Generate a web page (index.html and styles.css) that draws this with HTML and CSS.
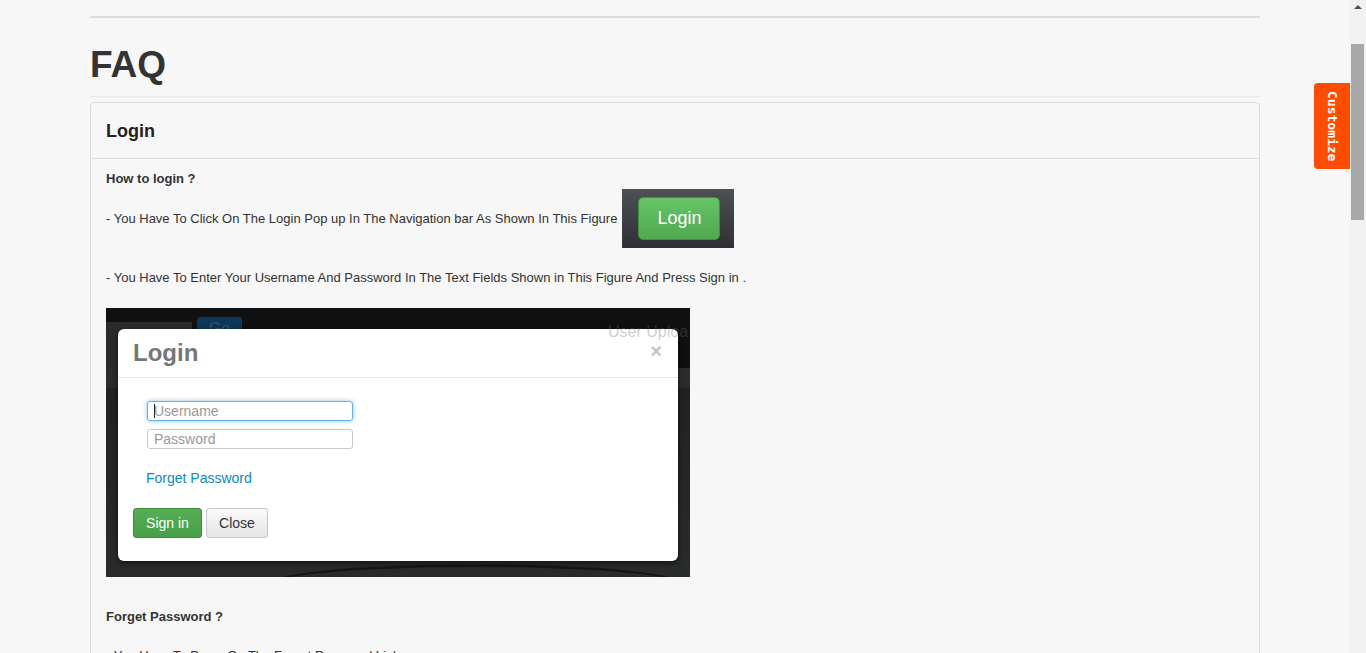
FILE: index.html
```html
<!DOCTYPE html>
<html>
<head>
<meta charset="utf-8">
<link rel="stylesheet" href="styles.css">
</head>
<body>
<div class="page">
  <div class="container">
    <hr class="top-rule">
    <div class="page-header"><h1>FAQ</h1></div>
    <div class="panel">
      <div class="panel-heading">Login</div>
      <div class="panel-body">
        <p class="q">How to login ?</p>
        <p class="line-img">- You Have To Click On The Login Pop up In The Navigation bar As Shown In This Figure
          <span class="shot-login"><span class="shot-login-btn">Login</span></span>
        </p>
        <p class="line l3">- You Have To Enter Your Username And Password In The Text Fields Shown in This Figure And Press Sign in .</p>
        <div class="shot-modal">
          <div class="sm-top">
            <div class="sm-tab"></div>
            <div class="sm-go">Go</div>
          </div>
          <div class="sm-band"></div>
          <div class="sm-dialog">
            <div class="sm-head"><span class="sm-title">Login</span><span class="sm-x">×</span></div>
            <div class="sm-body">
              <div class="sm-input focus"><span class="caret"></span>Username</div>
              <div class="sm-input">Password</div>
              <div class="sm-link">Forget Password</div>
              <div class="sm-btns"><span class="sm-sign">Sign in</span><span class="sm-close">Close</span></div>
            </div>
          </div>
          <div class="sm-user">User Uploa</div>
          <div class="sm-swoosh"></div>
        </div>
        <p class="q fp">Forget Password ?</p>
        <p class="line l5">- You Have To Press On The Forget Password Link</p>
      </div>
    </div>
  </div>
  <div class="customize">Customize</div>
  <div class="scrollbar"><div class="sb-up"></div><div class="sb-thumb"></div></div>
</div>
</body>
</html>
```
FILE: styles.css
```css
body {
  margin: 0;
  padding-right: 16px;
  background: #f7f7f7;
  font-family: "Liberation Sans", Arial, sans-serif;
  color: #333;
}
.page { min-height: 1400px; }
.container {
  width: 1170px;
  margin: 0 auto;
}
.top-rule {
  margin: 16px 0 0;
  border: 0;
  height: 2px;
  background: #dddddd;
}
.page-header {
  border-bottom: 1px solid #e8e8e8;
  height: 78px;
}
.page-header h1 {
  margin: 0;
  padding-top: 27px;
  font-size: 37px;
  line-height: 40px;
  font-weight: bold;
  color: #333;
}
.panel {
  margin-top: 5px;
  border: 1px solid #dddddd;
  border-radius: 4px;
  min-height: 1200px;
}
.panel-heading {
  height: 56px;
  box-sizing: border-box;
  padding: 15px 15px;
  font-size: 18px;
  line-height: 26px;
  font-weight: bold;
  color: #222;
  border-bottom: 1px solid #dddddd;
}
.panel-body {
  padding: 11px 15px;
  font-size: 13px;
  line-height: 18px;
}
.panel-body p { margin: 0; }
.q { font-weight: bold; color: #333; }
.line-img {
  display: flex;
  align-items: center;
  margin-top: 1px !important;
  white-space: nowrap;
}
.shot-login {
  display: block;
  width: 112px;
  height: 59px;
  margin-left: 5px;
  background: linear-gradient(#4d5055, #2e3034);
  position: relative;
}
.shot-login-btn {
  position: absolute;
  left: 16px;
  top: 8px;
  width: 82px;
  height: 43px;
  border-radius: 5px;
  background: linear-gradient(#66c466, #4fa94f);
  border: 1px solid #3f8f3f;
  box-sizing: border-box;
  color: #fff;
  font-size: 18px;
  line-height: 41px;
  text-align: center;
}
.l3 { margin-top: 21px !important; }
.shot-modal {
  margin-top: 21px;
  width: 584px;
  height: 269px;
  background: linear-gradient(#1d1e20, #2a2b2c);
  position: relative;
  overflow: hidden;
}
.sm-top {
  height: 60px;
  background: #0f1012;
  position: relative;
}
.sm-tab {
  position: absolute;
  left: 0;
  top: 14px;
  width: 86px;
  height: 50px;
  background: #2b2b2c;
}
.sm-go {
  position: absolute;
  left: 91px;
  top: 9px;
  width: 45px;
  height: 30px;
  background: #0c385a;
  border-radius: 3px;
  color: #3a5468;
  font-size: 16px;
  line-height: 24px;
  text-align: center;
}
.sm-user {
  position: absolute;
  left: 502px;
  top: 14px;
  white-space: nowrap;
  color: rgba(110,110,110,0.35);
  font-size: 16px;
  line-height: 20px;
}
.sm-band {
  height: 20px;
  background: #2c2c2d;
}
.sm-dialog {
  position: absolute;
  left: 12px;
  top: 21px;
  width: 560px;
  height: 232px;
  background: #fff;
  border-radius: 6px;
  box-shadow: 0 2px 6px rgba(0,0,0,0.6);
}
.sm-head {
  height: 48px;
  border-bottom: 1px solid #e8e8e8;
  display: flex;
  justify-content: space-between;
  align-items: center;
  padding: 0 15px;
}
.sm-title {
  font-size: 24px;
  font-weight: bold;
  color: #767676;
  margin-top: -1px;
}
.sm-x {
  font-size: 20px;
  font-weight: bold;
  color: #c4c4c4;
  margin-right: 1px;
  margin-top: -5px;
}
.sm-body { padding: 23px 15px 0; }
.sm-input {
  margin-left: 14px;
  width: 206px;
  height: 20px;
  box-sizing: border-box;
  border: 1px solid #c8c8c8;
  border-radius: 3px;
  font-size: 14px;
  line-height: 18px;
  color: #999;
  padding-left: 6px;
  margin-bottom: 8px;
  position: relative;
}
.sm-input.focus {
  border-color: rgba(82,168,236,0.9);
  box-shadow: 0 0 4px rgba(82,168,236,0.7);
}
.caret {
  position: absolute;
  left: 6px;
  top: 2px;
  width: 1px;
  height: 14px;
  background: #222;
}
.sm-link {
  margin-left: 13px;
  margin-top: 20px;
  font-size: 14px;
  line-height: 18px;
  color: #0b88c8;
}
.sm-btns {
  display: flex;
  gap: 4px;
  margin-top: 21px;
}
.sm-sign, .sm-close {
  height: 30px;
  box-sizing: border-box;
  border-radius: 3px;
  font-size: 14px;
  line-height: 28px;
  text-align: center;
}
.sm-sign {
  width: 69px;
  background: linear-gradient(#55ad55, #47a047);
  border: 1px solid #3e8e3e;
  color: #fff;
}
.sm-close {
  width: 62px;
  background: linear-gradient(#fbfbfb, #e4e4e4);
  border: 1px solid #c6c6c6;
  color: #333;
}
.sm-swoosh {
  position: absolute;
  left: 160px;
  top: 256px;
  width: 420px;
  height: 40px;
  border-radius: 50%;
  border-top: 3px solid #141516;
}
.fp { margin-top: 31px !important; }
.l5 { margin-top: 21px !important; }
.customize {
  position: fixed;
  right: 16px;
  top: 83px;
  width: 36px;
  height: 86px;
  background: #ff4c00;
  border-radius: 4px 0 0 4px;
  color: #fff;
  font-family: "DejaVu Sans Mono", monospace;
  font-weight: bold;
  font-size: 13px;
  writing-mode: vertical-rl;
  text-align: center;
  line-height: 36px;
}
.scrollbar {
  position: fixed;
  right: 0;
  top: 0;
  width: 16px;
  height: 100%;
  background: #f1f1f1;
}
.sb-up {
  position: absolute;
  left: 4px;
  top: 5px;
  width: 0;
  height: 0;
  border-left: 4px solid transparent;
  border-right: 4px solid transparent;
  border-bottom: 4px solid #505050;
}
.sb-thumb {
  position: absolute;
  left: 1px;
  top: 44px;
  width: 13px;
  height: 176px;
  background: #a8a8a8;
}
```
